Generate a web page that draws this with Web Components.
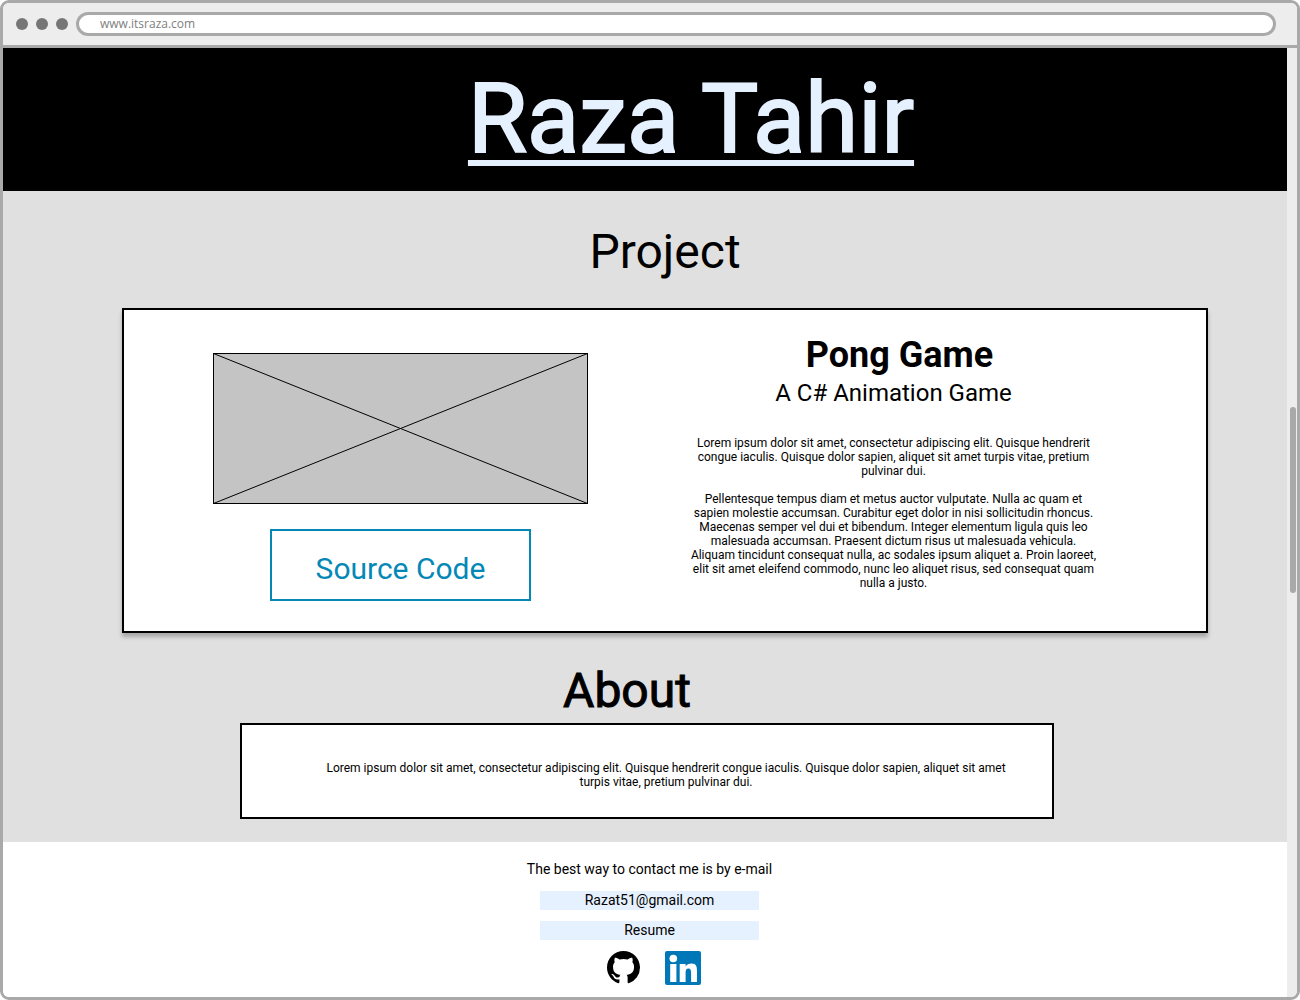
<!DOCTYPE html>
<html lang="en">
<head>
<meta charset="utf-8">
<meta name="viewport" content="width=device-width, initial-scale=1">
<title>Raza Tahir</title>
<style>
body { margin: 0; background: #fff; color: #000; font-family: Roboto, "Liberation Sans", sans-serif; }
</style>
</head>
<body>
<browser-frame url="www.itsraza.com">
  <site-header>Raza Tahir</site-header>
  <site-main>
    <section-title class="project">Project</section-title>
    <project-card heading="Pong Game" tagline="A C# Animation Game" link="Source Code">
      <p>Lorem ipsum dolor sit amet, consectetur adipiscing elit. Quisque hendrerit congue iaculis. Quisque dolor sapien, aliquet sit amet turpis vitae, pretium pulvinar dui.</p>
      <p>Pellentesque tempus diam et metus auctor vulputate. Nulla ac quam et sapien molestie accumsan. Curabitur eget dolor in nisi sollicitudin rhoncus. Maecenas semper vel dui et bibendum. Integer elementum ligula quis leo malesuada accumsan. Praesent dictum risus ut malesuada vehicula. Aliquam tincidunt consequat nulla, ac sodales ipsum aliquet a. Proin laoreet, elit sit amet eleifend commodo, nunc leo aliquet risus, sed consequat quam nulla a justo.</p>
    </project-card>
    <section-title class="about" strong>About</section-title>
    <about-card>Lorem ipsum dolor sit amet, consectetur adipiscing elit. Quisque hendrerit congue iaculis. Quisque dolor sapien, aliquet sit amet turpis vitae, pretium pulvinar dui.</about-card>
  </site-main>
  <site-footer></site-footer>
</browser-frame>

<script>
const define = (name, render) => customElements.define(name, class extends HTMLElement {
  connectedCallback() {
    if (this.shadowRoot) return;
    this.attachShadow({ mode: "open" }).innerHTML = render(this);
  }
});

define("browser-frame", el => `
<style>
  :host { display: flex; flex-direction: column; box-sizing: border-box; min-height: 100vh; border: 3px solid #a9a9a9; border-radius: 9px; overflow: hidden; }
  .bar { display: flex; align-items: center; gap: 8px; padding: 9px 21px 9px 13px; background: #ededed; border-bottom: 3px solid #a9a9a9; }
  .dot { width: 12px; height: 12px; border-radius: 50%; background: #767676; }
  input { flex: 1; min-width: 0; box-sizing: border-box; height: 24px; margin: 0; padding: 0 21px 2px; border: 3px solid #a9a9a9; border-radius: 12px; background: #fff; color: #808080; font: 12px/16px "Open Sans", "Noto Sans", sans-serif; outline: none; }
  .view { flex: 1; display: flex; }
  .page { flex: 1; min-width: 0; display: flex; flex-direction: column; }
  .track { width: 10px; display: flex; flex-direction: column; align-items: center; background: #ededed; }
  .track::before { content: ""; flex: 359; }
  .track::after { content: ""; flex: 404; }
  .thumb { width: 6px; height: 186px; margin-left: 2px; border-radius: 3px; background: #a9a9a9; }
</style>
<div class="bar">
  <span class="dot"></span><span class="dot"></span><span class="dot"></span>
  <input type="text" aria-label="Address" value="${el.getAttribute("url")}">
</div>
<div class="view">
  <div class="page"><slot></slot></div>
  <div class="track"><div class="thumb"></div></div>
</div>`);

define("site-header", () => `
<style>
  :host { display: block; padding: 15px 0 16px 92px; background: #000; color: #e6f1ff; text-align: center; }
  h1 { margin: 0; font-size: 96px; line-height: 112px; font-weight: 400; -webkit-text-stroke: 2px #e6f1ff; text-decoration: underline; text-decoration-thickness: 6px; text-underline-offset: 8px; }
</style>
<h1><slot></slot></h1>`);

define("site-main", () => `
<style>
  :host { display: block; padding: 33px 79px 23px 119px; background: #e0e0e0; }
  ::slotted(.about) { margin: 30px 76px 4px 0; }
  ::slotted(.project) { margin-bottom: 28px; }
  ::slotted(about-card) { margin: 0 154px 0 118px; }
</style>
<slot></slot>`);

define("section-title", () => `
<style>
  :host { display: block; text-align: center; }
  h2 { margin: 0; font-size: 48px; line-height: 56px; font-weight: 400; }
  :host([strong]) h2 { -webkit-text-stroke: 1px #000; }
</style>
<h2><slot></slot></h2>`);

define("image-placeholder", () => `
<style>
  :host { display: block; }
  svg { display: block; width: 100%; height: 151px; }
</style>
<svg viewBox="0 0 375 151" preserveAspectRatio="none" role="img" aria-label="Project picture" stroke="#000">
  <rect x=".5" y=".5" width="374" height="150" fill="#c4c4c4"/>
  <path d="M.5 .5 374.5 150.5M.5 150.5 374.5 .5" fill="none"/>
</svg>`);

define("project-card", el => `
<style>
  :host { display: grid; grid-template-columns: 1fr 1fr; padding: 24px 66px 30px 30px; background: #fff; border: 2px solid #000; box-shadow: 0 4px 4px rgba(0,0,0,.25); text-align: center; }
  .media { display: flex; flex-direction: column; align-items: center; gap: 25px; padding-top: 19px; }
  image-placeholder { width: 375px; max-width: 100%; }
  a { padding: 20px 44px 12px; border: 2px solid #0488b5; color: #0488b5; font-size: 30px; line-height: 36px; text-decoration: none; }
  .text { display: flex; flex-direction: column; align-items: center; }
  h3 { margin: 0; padding-left: 12px; font-size: 36px; line-height: 42px; font-weight: 700; }
  h4 { margin: 3px 0 29px; font-size: 24px; line-height: 28px; font-weight: 400; }
  .copy { display: flex; flex-direction: column; gap: 14px; max-width: 410px; font-size: 12px; line-height: 14px; }
  ::slotted(p) { margin: 0; }
</style>
<div class="media">
  <image-placeholder></image-placeholder>
  <a href="#source">${el.getAttribute("link")}</a>
</div>
<div class="text">
  <h3>${el.getAttribute("heading")}</h3>
  <h4>${el.getAttribute("tagline")}</h4>
  <div class="copy"><slot></slot></div>
</div>`);

define("about-card", () => `
<style>
  :host { display: block; padding: 36px 40px 28px 78px; background: #fff; border: 2px solid #000; font-size: 12px; line-height: 14px; text-align: center; margin-bottom: 1px; }
  p { margin: 0; }
</style>
<p><slot></slot></p>`);

define("site-footer", () => `
<style>
  :host { flex: 1; display: flex; flex-direction: column; align-items: center; gap: 11px; padding: 19px 0 11px 9px; background: #fff; font-size: 14px; line-height: 16px; text-align: center; }
  p { margin: 0 0 3px; }
  .link { width: 219px; padding: 1px 0 2px; background: #e6f1ff; color: #000; text-decoration: none; }
  .social { display: flex; gap: 25px; padding-left: 9px; }
  .social a { display: block; }
  svg { display: block; }
</style>
<p>The best way to contact me is by e-mail</p>
<a class="link" href="mailto:Razat51@gmail.com">Razat51@gmail.com</a>
<a class="link" href="#resume">Resume</a>
<div class="social">
  <a href="#github" aria-label="GitHub">
    <svg width="33" height="33" viewBox="0 0 16 16"><path d="M8 0C3.58 0 0 3.58 0 8c0 3.54 2.29 6.53 5.47 7.59.4.07.55-.17.55-.38 0-.19-.01-.82-.01-1.49-2.01.37-2.53-.49-2.69-.94-.09-.23-.48-.94-.82-1.13-.28-.15-.68-.52-.01-.53.63-.01 1.08.58 1.23.82.72 1.21 1.87.87 2.33.66.07-.52.28-.87.51-1.07-1.78-.2-3.64-.89-3.64-3.95 0-.87.31-1.59.82-2.15-.08-.2-.36-1.02.08-2.12 0 0 .67-.21 2.2.82.64-.18 1.32-.27 2-.27s1.36.09 2 .27c1.53-1.04 2.2-.82 2.2-.82.44 1.1.16 1.92.08 2.12.51.56.82 1.27.82 2.15 0 3.07-1.87 3.75-3.65 3.95.29.25.54.73.54 1.48 0 1.07-.01 1.93-.01 2.2 0 .21.15.46.55.38A8.01 8.01 0 0 0 16 8c0-4.42-3.58-8-8-8z"/></svg>
  </a>
  <a href="#linkedin" aria-label="LinkedIn">
    <svg width="36" height="34" viewBox="0 0 36 34"><rect width="36" height="34" rx="2" fill="#0077b7"/><g fill="#fff"><circle cx="8.3" cy="7.5" r="3.8"/><path d="M5.2 13h6.2v18H5.2zM14.7 13h5.9v2.5c1-1.8 3.1-3 6-3 4.8 0 5.4 3 5.4 8.2V31h-5.9v-9.2c0-2.7-.6-4.3-2.7-4.3-2.3 0-2.8 1.8-2.8 4.3V31h-5.900z"/></g></svg>
  </a>
</div>`);
</script>
</body>
</html>
